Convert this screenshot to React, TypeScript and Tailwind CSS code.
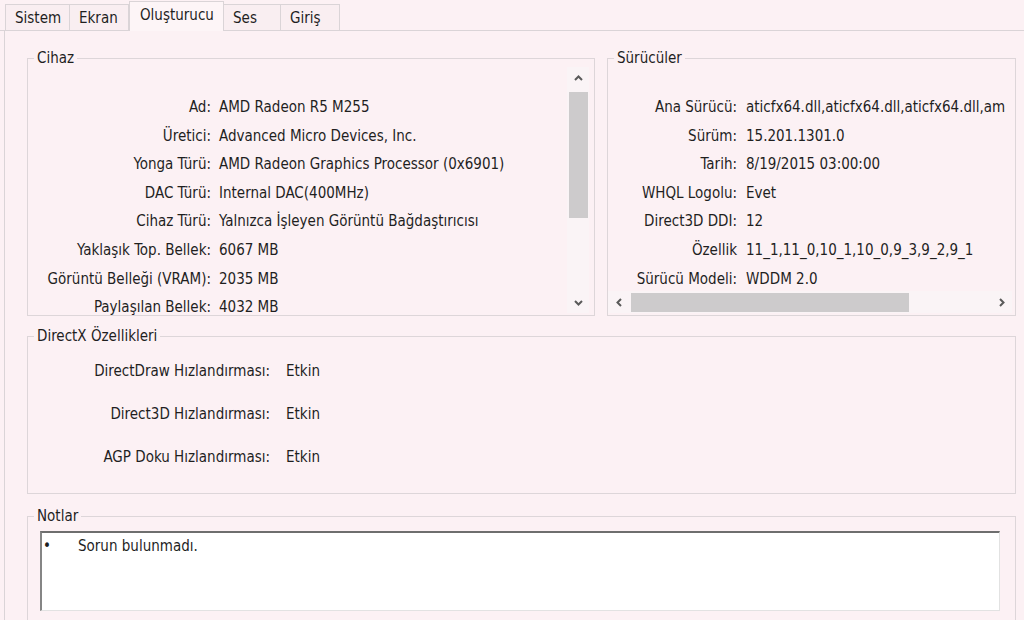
import React from "react";

const tabs = [
  { name: "Sistem", w: "w-[65px]" },
  { name: "Ekran", w: "w-[60px]" },
  { name: "Oluşturucu", w: "w-[95px]", active: true },
  { name: "Ses", w: "w-[58px]" },
  { name: "Giriş", w: "w-[60px]" },
];

const device = [
  ["Ad:", "AMD Radeon R5 M255"],
  ["Üretici:", "Advanced Micro Devices, Inc."],
  ["Yonga Türü:", "AMD Radeon Graphics Processor (0x6901)"],
  ["DAC Türü:", "Internal DAC(400MHz)"],
  ["Cihaz Türü:", "Yalnızca İşleyen Görüntü Bağdaştırıcısı"],
  ["Yaklaşık Top. Bellek:", "6067 MB"],
  ["Görüntü Belleği (VRAM):", "2035 MB"],
  ["Paylaşılan Bellek:", "4032 MB"],
];

const drivers = [
  ["Ana Sürücü:", "aticfx64.dll,aticfx64.dll,aticfx64.dll,am"],
  ["Sürüm:", "15.201.1301.0"],
  ["Tarih:", "8/19/2015 03:00:00"],
  ["WHQL Logolu:", "Evet"],
  ["Direct3D DDI:", "12"],
  ["Özellik", "11_1,11_0,10_1,10_0,9_3,9_2,9_1"],
  ["Sürücü Modeli:", "WDDM 2.0"],
];

const features = [
  ["DirectDraw Hızlandırması:", "Etkin"],
  ["Direct3D Hızlandırması:", "Etkin"],
  ["AGP Doku Hızlandırması:", "Etkin"],
];

const Chevron = ({ dir }: { dir: "up" | "down" | "left" | "right" }) => {
  const pts = {
    up: "2,7 5.5,3.5 9,7",
    down: "2,4 5.5,7.5 9,4",
    left: "7,2 3.5,5.5 7,9",
    right: "4,2 7.5,5.5 4,9",
  }[dir];
  return (
    <svg width="11" height="11" viewBox="0 0 11 11">
      <polyline points={pts} fill="none" stroke="#5a5a5a" strokeWidth="2" />
    </svg>
  );
};

const Legend = ({ children }: { children: React.ReactNode }) => (
  <legend className="ml-[6px] px-[3px] leading-[17px]">{children}</legend>
);

const App = () => {
  return (
    <div className="w-[1024px] h-[620px] overflow-hidden bg-[#fcf1f4] text-[#1f1f1f] text-[15px] font-['DejaVu_Sans_Condensed','Liberation_Sans',Arial,sans-serif]">
      <div className="flex h-[31px] items-end pl-[5px] border-b border-[#dad4d7]">
        {tabs.map((t) =>
          t.active ? (
            <div
              key={t.name}
              className={`${t.w} relative z-10 -mb-px h-[30px] pl-[10px] pt-[5px] bg-[#fdf5f7] border-t border-l border-r border-[#dad4d7] leading-[17px]`}
            >
              {t.name}
            </div>
          ) : (
            <div
              key={t.name}
              className={`${t.w} h-[26px] pl-[9px] pt-[5px] bg-[#f9eef1] border-t border-l border-r border-[#dad4d7] -ml-px first:ml-0 leading-[17px]`}
            >
              {t.name}
            </div>
          )
        )}
      </div>

      <div className="ml-[4px] h-[589px] border-l border-[#dad4d7] pl-[22px] pr-[8px]">
        <div className="flex gap-[12px] pt-[19px]">
          <fieldset className="w-[568px] border border-[#ddd6d9] pb-[2px]">
            <Legend>Cihaz</Legend>
            <div className="flex h-[246px] pr-[5px]">
              <div className="flex-1 pt-[26px]">
                {device.map(([k, v]) => (
                  <div key={k} className="flex h-[28.6px] items-center whitespace-nowrap">
                    <div className="w-[183px] text-right">{k}</div>
                    <div className="pl-[8px]">{v}</div>
                  </div>
                ))}
              </div>
              <div className="flex w-[22px] flex-col bg-[#faf4f6]">
                <div className="flex h-[22px] items-center justify-center">
                  <Chevron dir="up" />
                </div>
                <div className="mx-auto mt-[3px] h-[126px] w-[19px] bg-[#cdcbcc]" />
                <div className="flex-1" />
                <div className="flex h-[22px] items-center justify-center">
                  <Chevron dir="down" />
                </div>
              </div>
            </div>
          </fieldset>

          <fieldset className="flex-1 min-w-0 border border-[#ddd6d9] pb-[2px]">
            <Legend>Sürücüler</Legend>
            <div className="flex h-[246px] flex-col pr-[3px]">
              <div className="flex-1 overflow-hidden pt-[26px]">
                {drivers.map(([k, v]) => (
                  <div key={k} className="flex h-[28.6px] items-center whitespace-nowrap">
                    <div className="w-[129px] shrink-0 text-right">{k}</div>
                    <div className="pl-[9px]">{v}</div>
                  </div>
                ))}
              </div>
              <div className="flex h-[22px] items-center bg-[#faf4f6]">
                <div className="flex w-[22px] justify-center">
                  <Chevron dir="left" />
                </div>
                <div className="h-[19px] w-[278px] bg-[#cdcbcc] ml-[1px]" />
                <div className="flex-1" />
                <div className="flex w-[22px] justify-center">
                  <Chevron dir="right" />
                </div>
              </div>
            </div>
          </fieldset>
        </div>

        <fieldset className="mt-[12px] border border-[#ddd6d9] pt-[5px] pb-[14px]">
          <Legend>DirectX Özellikleri</Legend>
          {features.map(([k, v]) => (
            <div key={k} className="flex h-[43px] items-center">
              <div className="w-[242px] text-right">{k}</div>
              <div className="pl-[16px]">{v}</div>
            </div>
          ))}
        </fieldset>

        <fieldset className="mt-[14px] border border-[#ddd6d9] pb-[10px]">
          <Legend>Notlar</Legend>
          <div className="ml-[12px] mr-[15px] mt-[6px] h-[80px] bg-white border-t-2 border-l-2 border-r border-b border-t-[#6e6e6e] border-l-[#858585] border-r-[#e2e2e2] border-b-[#e2e2e2] pt-[5px] pl-[1px] flex leading-[17px]">
            <span className="w-[35px]">•</span>
            <span>Sorun bulunmadı.</span>
          </div>
        </fieldset>
      </div>
    </div>
  );
};

export default App;
